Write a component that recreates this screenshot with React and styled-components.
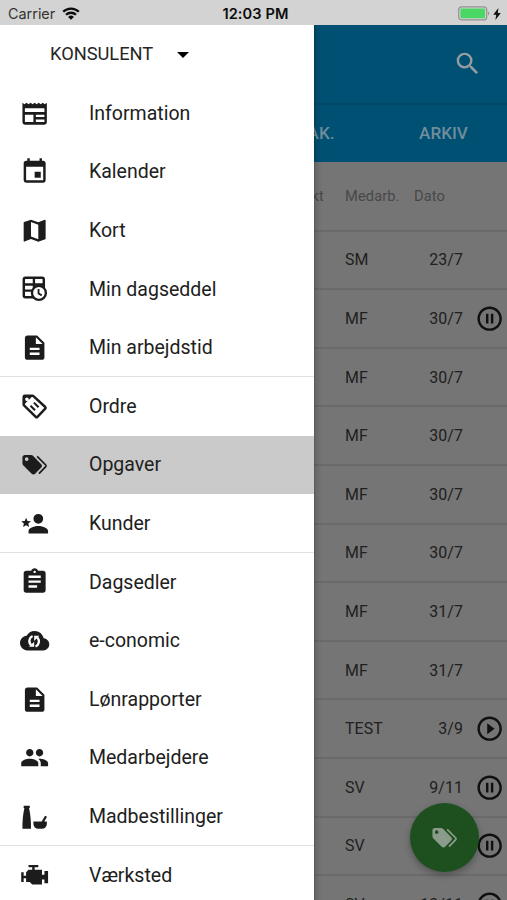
import React from "react";
import styled, { createGlobalStyle, css } from "styled-components";
import {
  MdEvent,
  MdDescription,
  MdAssignment,
  MdPeople,
  MdSearch,
  MdPauseCircleOutline,
  MdPlayCircleOutline,
} from "react-icons/md";

const GlobalStyle = createGlobalStyle`
  *, *::before, *::after { box-sizing: border-box; }
  body { margin: 0; overflow: hidden; font-family: Roboto, sans-serif; }
`;

const ROW = "58.6px";

const Screen = styled.div`
  position: relative;
  width: 507px;
  height: 900px;
  overflow: hidden;
  display: flex;
  flex-direction: column;
  background: #757575;
`;

const StatusBar = styled.header`
  flex: none;
  height: 25px;
  padding: 2px 6px 0 8px;
  display: grid;
  grid-template-columns: 1fr auto 1fr;
  align-items: center;
  background: #d3d3d3;
  color: #0c0c0c;
  font-family: Inter, sans-serif;
`;

const StatusGroup = styled.div`
  display: flex;
  align-items: center;
  justify-content: ${(p) => (p.$end ? "flex-end" : "flex-start")};
  gap: ${(p) => (p.$end ? "3px" : "7px")};
`;

const Carrier = styled.span`
  font-size: 14.4px;
  color: #333;
`;

const Clock = styled.span`
  padding-left: 2px;
  font-size: 14.6px;
  font-weight: 600;
  letter-spacing: 0.1px;
`;

const Body = styled.div`
  position: relative;
  flex: 1;
  min-height: 0;
`;

const Page = styled.main`
  height: 100%;
  overflow: hidden;
  display: flex;
  flex-direction: column;
`;

const AppBar = styled.div`
  flex: none;
  height: 80px;
  padding: 0 25px 0 0;
  display: flex;
  align-items: center;
  justify-content: flex-end;
  background: #005073;
  border-bottom: 2px solid #004866;
  color: #969da0;
`;

const Tabs = styled.nav`
  flex: none;
  height: 57px;
  padding-bottom: 2px;
  display: flex;
  justify-content: flex-end;
  align-items: center;
  background: #005073;
`;

const Tab = styled.span`
  width: 127px;
  text-align: center;
  font-size: 17.1px;
  font-weight: 500;
  color: #6f8d9b;

  &:first-child {
    padding-left: 9px;
  }
`;

const rowGrid = css`
  flex: none;
  display: grid;
  grid-template-columns: 345px 54px 64px 1fr;
  align-items: center;
  border-bottom: 2px solid #6a6a6a;
`;

const TableHead = styled.div`
  ${rowGrid}
  height: 69.6px;
  font-size: 14.6px;
  letter-spacing: 0.15px;
  color: #484848;
  span:first-child {
    padding-right: 21px;
    text-align: right;
  }
  span:last-child {
    padding-left: 15px;
  }
`;

const TableRow = styled.div`
  ${rowGrid}
  height: ${ROW};
  font-size: 15.9px;
  color: #202020;
  letter-spacing: 0.1px;
`;

const Medarb = styled.span`
  grid-column: 2;
`;

const DateCell = styled.span`
  text-align: right;
  letter-spacing: 0.1px;
`;

const Status = styled.span`
  display: flex;
  padding-left: 12px;
  color: #101010;
`;

const Fab = styled.button`
  position: absolute;
  left: 410px;
  top: 778px;
  width: 69px;
  height: 69px;
  padding: 0;
  border: 0;
  border-radius: 50%;
  display: flex;
  align-items: center;
  justify-content: center;
  background: #1d4f1f;
  color: #8c9c8c;
  box-shadow: 0 3px 7px rgba(0, 0, 0, 0.3);
`;

const Drawer = styled.aside`
  position: absolute;
  inset: 0 auto 0 0;
  width: 313.5px;
  overflow: hidden;
  background: #fff;
`;

const DrawerShade = styled.div`
  position: absolute;
  inset: 0 auto 0 313px;
  width: 9px;
  background: linear-gradient(to right, rgba(0, 0, 0, 0.3), rgba(0, 0, 0, 0.1) 35%, transparent);
`;

const Account = styled.div`
  height: 59px;
  padding: 0 0 3px 50px;
  display: flex;
  align-items: center;
  gap: 24px;
  font-size: 18.3px;
  letter-spacing: -0.03px;
  color: #262626;
`;

const Caret = styled.i`
  margin-top: 4px;
  border: 6px solid transparent;
  border-top-color: #000;
  border-bottom: 0;
`;

const MenuItem = styled.div`
  height: ${ROW};
  padding-left: 20.4px;
  display: flex;
  align-items: center;
  gap: 39.3px;
  font-size: 19.5px;
  color: #202020;
  background: ${(p) => (p.$active ? "#cacaca" : "transparent")};
  box-shadow: ${(p) => (p.$divided ? "0 -1px #e0e0e0" : "none")};
  svg {
    flex: none;
    color: #1c1c1c;
  }
`;

const Glyph = ({ d, children }) => (
  <svg width="29.3" height="29.3" viewBox="0 0 24 24" fill="currentColor">
    {d ? <path d={d} /> : children}
  </svg>
);

const TAGS =
  "M5.5,9A1.5,1.5 0 0,0 7,7.5A1.5,1.5 0 0,0 5.5,6A1.5,1.5 0 0,0 4,7.5A1.5,1.5 0 0,0 5.5,9M17.41,11.58C17.77,11.94 18,12.44 18,13C18,13.55 17.78,14.05 17.41,14.41L12.41,19.41C12.05,19.77 11.55,20 11,20C10.45,20 9.95,19.78 9.58,19.41L2.59,12.42C2.22,12.05 2,11.55 2,11V6C2,4.89 2.89,4 4,4H9C9.55,4 10.05,4.22 10.41,4.58L17.41,11.58M13.54,5.71L14.54,4.71L21.41,11.58C21.78,11.94 22,12.45 22,13C22,13.55 21.78,14.05 21.42,14.41L16.04,19.79L15.04,18.79L20.75,13L13.54,5.71Z";
const NEWSPAPER =
  "M20 10.7H4V7.6H20M20 14.7H13V12.9H20M20 18.8H13V16.8H20M11 18.8H4V12.9H11M20.33 4.2L18.67 3L17 4.2L15.33 3L13.67 4.2L12 3L10.33 4.2L8.67 3L7 4.2L5.33 3L3.67 4.2L2 3V19A2 2 0 0 0 4 21H20A2 2 0 0 0 22 19V3L20.33 4.2Z";
const MAP =
  "M15,19L9,16.89V5L15,7.11M20.5,3C20.44,3 20.39,3 20.34,3L15,5.1L9,3L3.36,4.9C3.15,4.97 3,5.15 3,5.38V20.5A0.5,0.5 0 0,0 3.5,21C3.55,21 3.61,21 3.66,20.97L9,18.9L15,21L20.64,19.1C20.85,19 21,18.85 21,18.62V3.5A0.5,0.5 0 0,0 20.5,3Z";
const ACCOUNT_STAR =
  "M15,14C12.33,14 7,15.33 7,18V20H23V18C23,15.33 17.67,14 15,14M15,12A4,4 0 0,0 19,8A4,4 0 0,0 15,4A4,4 0 0,0 11,8A4,4 0 0,0 15,12M5,13.28L7.45,14.77L6.8,11.96L9,10.08L6.11,9.83L5,7.19L3.87,9.83L1,10.08L3.18,11.96L2.5,14.77L5,13.28Z";
const FOOD =
  "M22,18A4,4 0 0,1 18,22H15A4,4 0 0,1 11,18V16H17.79L20.55,11.23L22.11,12.13L19.87,16H22V18M9,22H2C2,19 2,16 2.33,12.83C2.6,10.3 3.08,7.66 3.6,5H3V3H4L7,3H8V5H7.4C7.92,7.66 8.4,10.3 8.67,12.83C9,16 9,19 9,22Z";
const ENGINE =
  "M7,4V6H10V8H7L5,10V13H3V10H1V18H3V15H5V18H8L10,20H18V16H20V19H23V9H20V12H18V8H12V6H15V4H7Z";

const TableClockIcon = () => (
  <Glyph>
    <g fill="none" stroke="currentColor" strokeWidth="2">
      <rect x="3.1" y="3.1" width="16.4" height="16" rx="1.4" />
      <path d="M3 8.6h16.5M3 13.6h16.5M11.4 3v16" strokeWidth="1.9" />
    </g>
    <path d="M16 20h6v-8h-1.6z" fill="#fff" />
    <circle cx="15.5" cy="15.5" r="5.7" fill="#fff" stroke="currentColor" strokeWidth="1.9" />
    <path d="M15.2 12.2v3.7l2.6 1.6" fill="none" stroke="currentColor" strokeWidth="1.5" />
  </Glyph>
);

const TagTextIcon = () => (
  <Glyph>
    <g fill="none" stroke="currentColor" strokeWidth="2" strokeLinejoin="round">
      <path d="M3 4a1 1 0 0 1 1-1h6.3a1 1 0 0 1 .7.3l9.7 9a1 1 0 0 1 0 1.4l-6.4 6.6a1 1 0 0 1-1.4 0L3.3 11a1 1 0 0 1-.3-.7z" />
      <path d="M8.6 11.3l3.7 3.6M11.4 8.7l3.8 3.7" strokeWidth="1.7" />
    </g>
    <path fillRule="evenodd" d="M3 3h7.6L3 10.6zM5.7 4.5a1.5 1.5 0 1 0 0 3 1.5 1.5 0 0 0 0-3z" />
  </Glyph>
);

const CloudSyncIcon = () => (
  <Glyph>
    <path d="M19.35 10.04C18.67 6.59 15.64 4 12 4 9.11 4 6.6 5.64 5.35 8.04 2.34 8.36 0 10.91 0 14c0 3.31 2.69 6 6 6h13c2.76 0 5-2.24 5-5 0-2.64-2.05-4.78-4.65-4.96z" />
    <path d="M10.3 8.2a4.5 4.5 0 0 0-1.2 7.4M12.7 16.8a4.5 4.5 0 0 0 1.4-7.4" fill="none" stroke="#fff" strokeWidth="1.9" />
    <path d="M7.4 17h4.2v-4.2zM15.8 8h-4.2v4.2z" fill="#fff" />
  </Glyph>
);

const WifiIcon = () => (
  <svg width="18" height="13" viewBox="0 0 18 13" fill="none" stroke="#0c0c0c" strokeWidth="2.3">
    <path d="M1.2 4.8a11 11 0 0 1 15.6 0" />
    <path d="M4 7.8a7.1 7.1 0 0 1 10 0" />
    <path d="M9 12.8L6.1 9.9a4.1 4.1 0 0 1 5.8 0z" fill="#0c0c0c" stroke="none" />
  </svg>
);

const BatteryIcon = () => (
  <svg width="32" height="15" viewBox="0 0 32 15">
    <rect x="0.7" y="0.9" width="28" height="13" rx="3" fill="none" stroke="#929292" strokeWidth="1.2" />
    <rect x="2.4" y="2.6" width="24.6" height="9.6" rx="1.3" fill="#4bd763" />
    <path d="M30 5.2a2.7 2.7 0 0 1 0 4.4z" fill="#929292" />
  </svg>
);

const BoltIcon = () => (
  <svg width="8" height="12" viewBox="0 0 8 12">
    <path d="M5.4 0L0.2 6.8h3L2.4 12 7.8 4.9h-3z" fill="#111" />
  </svg>
);

const menu = [
  { label: "Information", icon: <Glyph d={NEWSPAPER} /> },
  { label: "Kalender", icon: <MdEvent size={29.3} /> },
  { label: "Kort", icon: <Glyph d={MAP} /> },
  { label: "Min dagseddel", icon: <TableClockIcon /> },
  { label: "Min arbejdstid", icon: <MdDescription size={29.3} /> },
  { label: "Ordre", icon: <TagTextIcon />, divided: true },
  { label: "Opgaver", icon: <Glyph d={TAGS} />, active: true },
  { label: "Kunder", icon: <Glyph d={ACCOUNT_STAR} /> },
  { label: "Dagsedler", icon: <MdAssignment size={29.3} />, divided: true },
  { label: "e-conomic", icon: <CloudSyncIcon /> },
  { label: "Lønrapporter", icon: <MdDescription size={29.3} /> },
  { label: "Medarbejdere", icon: <MdPeople size={29.3} /> },
  { label: "Madbestillinger", icon: <Glyph d={FOOD} /> },
  { label: "Værksted", icon: <Glyph d={ENGINE} />, divided: true },
];

const tasks = [
  ["SM", "23/7"],
  ["MF", "30/7", "pause"],
  ["MF", "30/7"],
  ["MF", "30/7"],
  ["MF", "30/7"],
  ["MF", "30/7"],
  ["MF", "31/7"],
  ["MF", "31/7"],
  ["TEST", "3/9", "play"],
  ["SV", "9/11", "pause"],
  ["SV", "", "pause"],
  ["SV", "13/11", "pause"],
];

export default function App() {
  return (
    <Screen>
      <GlobalStyle />
      <StatusBar>
        <StatusGroup>
          <Carrier>Carrier</Carrier>
          <WifiIcon />
        </StatusGroup>
        <Clock>12:03 PM</Clock>
        <StatusGroup $end>
          <BatteryIcon />
          <BoltIcon />
        </StatusGroup>
      </StatusBar>
      <Body>
        <Page>
          <AppBar>
            <MdSearch size={29.3} />
          </AppBar>
          <Tabs>
            <Tab>AK.</Tab>
            <Tab>ARKIV</Tab>
          </Tabs>
          <TableHead>
            <span>kt</span>
            <span>Medarb.</span>
            <span>Dato</span>
          </TableHead>
          {tasks.map(([who, date, state], i) => (
            <TableRow key={i}>
              <Medarb>{who}</Medarb>
              <DateCell>{date}</DateCell>
              <Status>
                {state === "pause" && <MdPauseCircleOutline size={29.3} />}
                {state === "play" && <MdPlayCircleOutline size={29.3} />}
              </Status>
            </TableRow>
          ))}
        </Page>
        <Fab aria-label="Opgaver">
          <Glyph d={TAGS} />
        </Fab>
        <DrawerShade />
        <Drawer>
          <Account>
            KONSULENT
            <Caret />
          </Account>
          {menu.map(({ label, icon, active, divided }) => (
            <MenuItem key={label} $active={active} $divided={divided}>
              {icon}
              {label}
            </MenuItem>
          ))}
        </Drawer>
      </Body>
    </Screen>
  );
}
